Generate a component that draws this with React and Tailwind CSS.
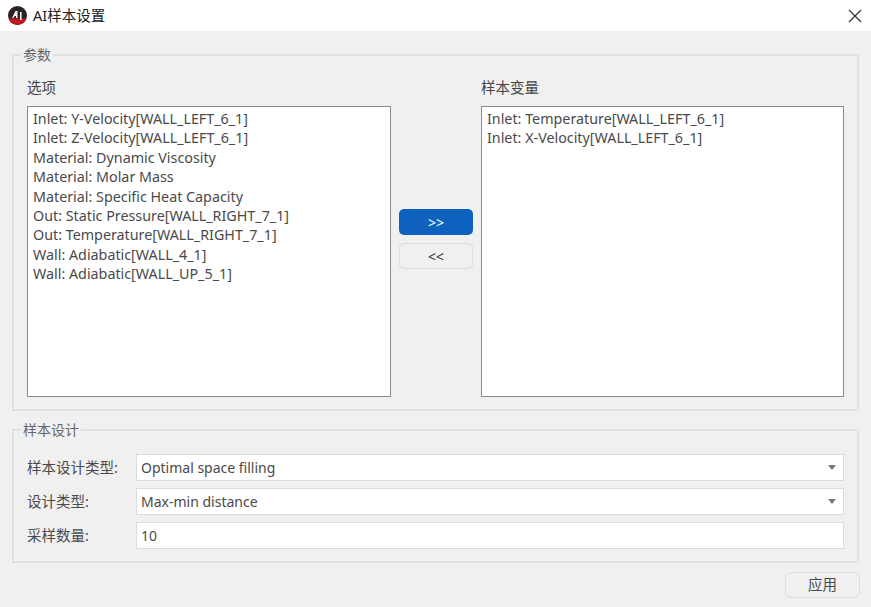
import React from 'react';

const FONT = "font-['Noto_Sans','Noto_Sans_CJK_SC',sans-serif]";

const OPTIONS = [
  'Inlet: Y-Velocity[WALL_LEFT_6_1]',
  'Inlet: Z-Velocity[WALL_LEFT_6_1]',
  'Material: Dynamic Viscosity',
  'Material: Molar Mass',
  'Material: Specific Heat Capacity',
  'Out: Static Pressure[WALL_RIGHT_7_1]',
  'Out: Temperature[WALL_RIGHT_7_1]',
  'Wall: Adiabatic[WALL_4_1]',
  'Wall: Adiabatic[WALL_UP_5_1]',
];

const SELECTED = ['Inlet: Temperature[WALL_LEFT_6_1]', 'Inlet: X-Velocity[WALL_LEFT_6_1]'];

const Logo = () => (
  <svg width="19" height="19" viewBox="0 0 19 19" className="shrink-0">
    <circle cx="9.5" cy="9.5" r="9.5" fill="#2b2326" />
    <path d="M0.6 12.5 H18.4 A9.5 9.5 0 0 1 0.6 12.5 Z" fill="#c4161c" />
    <path d="M4 12 L7.5 5 H9.5 L9.5 12 H8 V10 H6.5 L5.5 12 Z" fill="#f4f4f4" />
    <path d="M12 6 H13.6 V14 H12 Z" fill="#f4f4f4" />
  </svg>
);

const ListBox = ({ title, items, width }) => (
  <div className={`flex flex-col ${width}`}>
    <div className="h-[30px] text-[14.5px] leading-[22px] text-[#444]">{title}</div>
    <div className="h-[291px] bg-white border border-[#8c8c8c] pl-[5px] pt-[2px] text-[14.3px] leading-[19.4px] text-[#4a4a4a]">
      {items.map((item) => (
        <div key={item} className="whitespace-nowrap">{item}</div>
      ))}
    </div>
  </div>
);

const FieldRow = ({ label, value, arrow }) => (
  <div className="flex items-center h-[27px]">
    <div className="w-[109px] text-[14.5px] text-[#4a4a4a] whitespace-nowrap">{label}</div>
    <div className="flex-1 h-full flex items-center justify-between bg-white border border-[#dcdcdc] pl-1 pr-[7px] text-[14px] text-[#4a4a4a]">
      <span>{value}</span>
      {arrow && <span className="w-0 h-0 border-x-[4px] border-x-transparent border-t-[5px] border-t-[#777]" />}
    </div>
  </div>
);

const App = () => {
  return (
    <div className={`w-[871px] h-[607px] overflow-hidden flex flex-col bg-[#f0f0f0] ${FONT}`}>
      {/* Title bar */}
      <div className="h-[31px] shrink-0 bg-white flex items-center pl-[8px] pr-[9px]">
        <Logo />
        <span className="ml-[6px] text-[14.5px] text-[#222]">AI样本设置</span>
        <svg width="14" height="14" viewBox="0 0 14 14" className="ml-auto" fill="none" stroke="#333" strokeWidth="1.2">
          <path d="M1 1 L13 13 M13 1 L1 13" />
        </svg>
      </div>

      <div className="flex-1 flex flex-col px-[12px]">
        {/* 参数 */}
        <fieldset className="mt-[14px] h-[366px] border-2 border-[#e0e0e0] pl-[13px] pr-[12px]">
          <legend className="-ml-[6px] px-[2px] text-[14px] leading-[20px] text-[#666]">参数</legend>
          <div className="flex mt-[11px]">
            <ListBox title="选项" items={OPTIONS} width="w-[364px]" />
            <div className="flex flex-col gap-[8px] pt-[133px] mx-[8px]">
              <button className="w-[74px] h-[26px] rounded-[5px] bg-[#0f62bd] text-white text-[14px]">&gt;&gt;</button>
              <button className="w-[74px] h-[26px] rounded-[5px] border border-[#dcdcdc] bg-[#f0f0f0] text-[#333] text-[14px]">&lt;&lt;</button>
            </div>
            <ListBox title="样本变量" items={SELECTED} width="w-[363px]" />
          </div>
        </fieldset>

        {/* 样本设计 */}
        <fieldset className="mt-[9px] h-[143px] border-2 border-[#e0e0e0] pl-[13px] pr-[13px]">
          <legend className="-ml-[6px] px-[2px] text-[14px] leading-[20px] text-[#666]">样本设计</legend>
          <div className="flex flex-col gap-[7px] mt-[14px]">
            <FieldRow label="样本设计类型:" value="Optimal space filling" arrow />
            <FieldRow label="设计类型:" value="Max-min distance" arrow />
            <FieldRow label="采样数量:" value="10" />
          </div>
        </fieldset>

        <div className="flex justify-end mt-[9px] -mr-[1px]">
          <button className="w-[75px] h-[26px] rounded-[6px] border border-[#dcdcdc] text-[14.5px] text-[#4a4a4a]">应用</button>
        </div>
      </div>
    </div>
  );
};

export default App;
